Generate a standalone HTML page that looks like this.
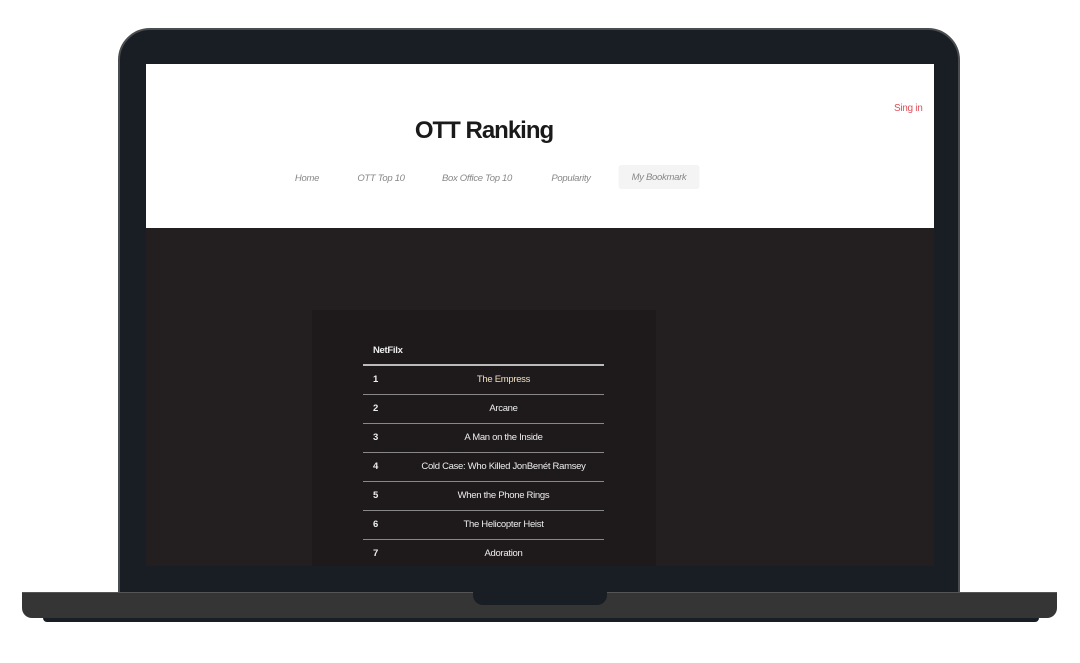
<!DOCTYPE html>
<html><head><meta charset="utf-8"><style>
*{margin:0;padding:0;box-sizing:border-box}
body{width:1080px;height:663px;background:#fff;position:relative;overflow:hidden;font-family:"Liberation Sans",sans-serif}
.lid{position:absolute;left:118px;top:28px;width:842px;height:570px;background:#181e23;border:2px solid #4a4d50;border-radius:32px 32px 0 0}
.screen{position:absolute;left:146px;top:64px;width:788px;height:502px;background:#231f20;overflow:hidden}
.hdr{position:absolute;left:0;top:0;width:788px;height:164px;background:#fff}
.title{position:absolute;left:0;width:676px;text-align:center;top:53px;font-size:24px;font-weight:bold;color:#1a1a1a;letter-spacing:-1px}
.sign{position:absolute;left:748px;top:39px;font-size:10px;color:#e0505a;letter-spacing:-0.3px}
.nav{position:absolute;top:103px;height:24px;line-height:24px;font-size:9.5px;font-style:italic;color:#888;transform:translateX(-50%);white-space:nowrap;letter-spacing:-0.3px}
.bm{background:#f4f4f4;width:81px;text-align:center;border-radius:3px;top:101px;line-height:25px}
.card{position:absolute;left:166px;top:246px;width:344px;height:260px;background:#1e1a1b}
table{position:absolute;left:51px;top:26px;width:241px;border-collapse:collapse;color:#eee;font-size:9.5px;letter-spacing:-0.3px}
td,th{height:29px;vertical-align:middle}
th{text-align:left;padding-left:10px;font-weight:bold;height:29px;border-bottom:2px solid #bbb}
td:first-child{padding-left:10px;font-weight:bold;width:40px}
td:last-child{text-align:center}
tr+tr td{border-top:1px solid #888}
.base{position:absolute;left:22px;top:592px;width:1035px;height:26px;background:#353535;border-top:1px solid #555;border-radius:0 0 10px 10px}
.shadow{position:absolute;left:43px;top:616px;width:996px;height:6px;background:#181e23;border-radius:0 0 4px 4px}
.notch{position:absolute;left:473px;top:592px;width:134px;height:13px;background:#181e23;border-radius:0 0 10px 10px}
</style></head><body>
<div class="lid"></div>
<div class="screen">
 <div class="hdr">
  <div class="title">OTT Ranking</div>
  <div class="sign">Sing in</div>
  <div class="nav" style="left:161px">Home</div>
  <div class="nav" style="left:235px">OTT Top 10</div>
  <div class="nav" style="left:331px">Box Office Top 10</div>
  <div class="nav" style="left:425px">Popularity</div>
  <div class="nav bm" style="left:513px">My Bookmark</div>
 </div>
 <div class="card">
  <table>
   <tr><th colspan="2">NetFilx</th></tr>
   <tr><td>1</td><td style="color:#f0e0c0">The Empress</td></tr>
   <tr><td>2</td><td>Arcane</td></tr>
   <tr><td>3</td><td>A Man on the Inside</td></tr>
   <tr><td>4</td><td>Cold Case: Who Killed JonBenét Ramsey</td></tr>
   <tr><td>5</td><td>When the Phone Rings</td></tr>
   <tr><td>6</td><td>The Helicopter Heist</td></tr>
   <tr><td>7</td><td>Adoration</td></tr>
  </table>
 </div>
</div>
<div class="shadow"></div>
<div class="base"></div>
<div class="notch"></div>
</body></html>
